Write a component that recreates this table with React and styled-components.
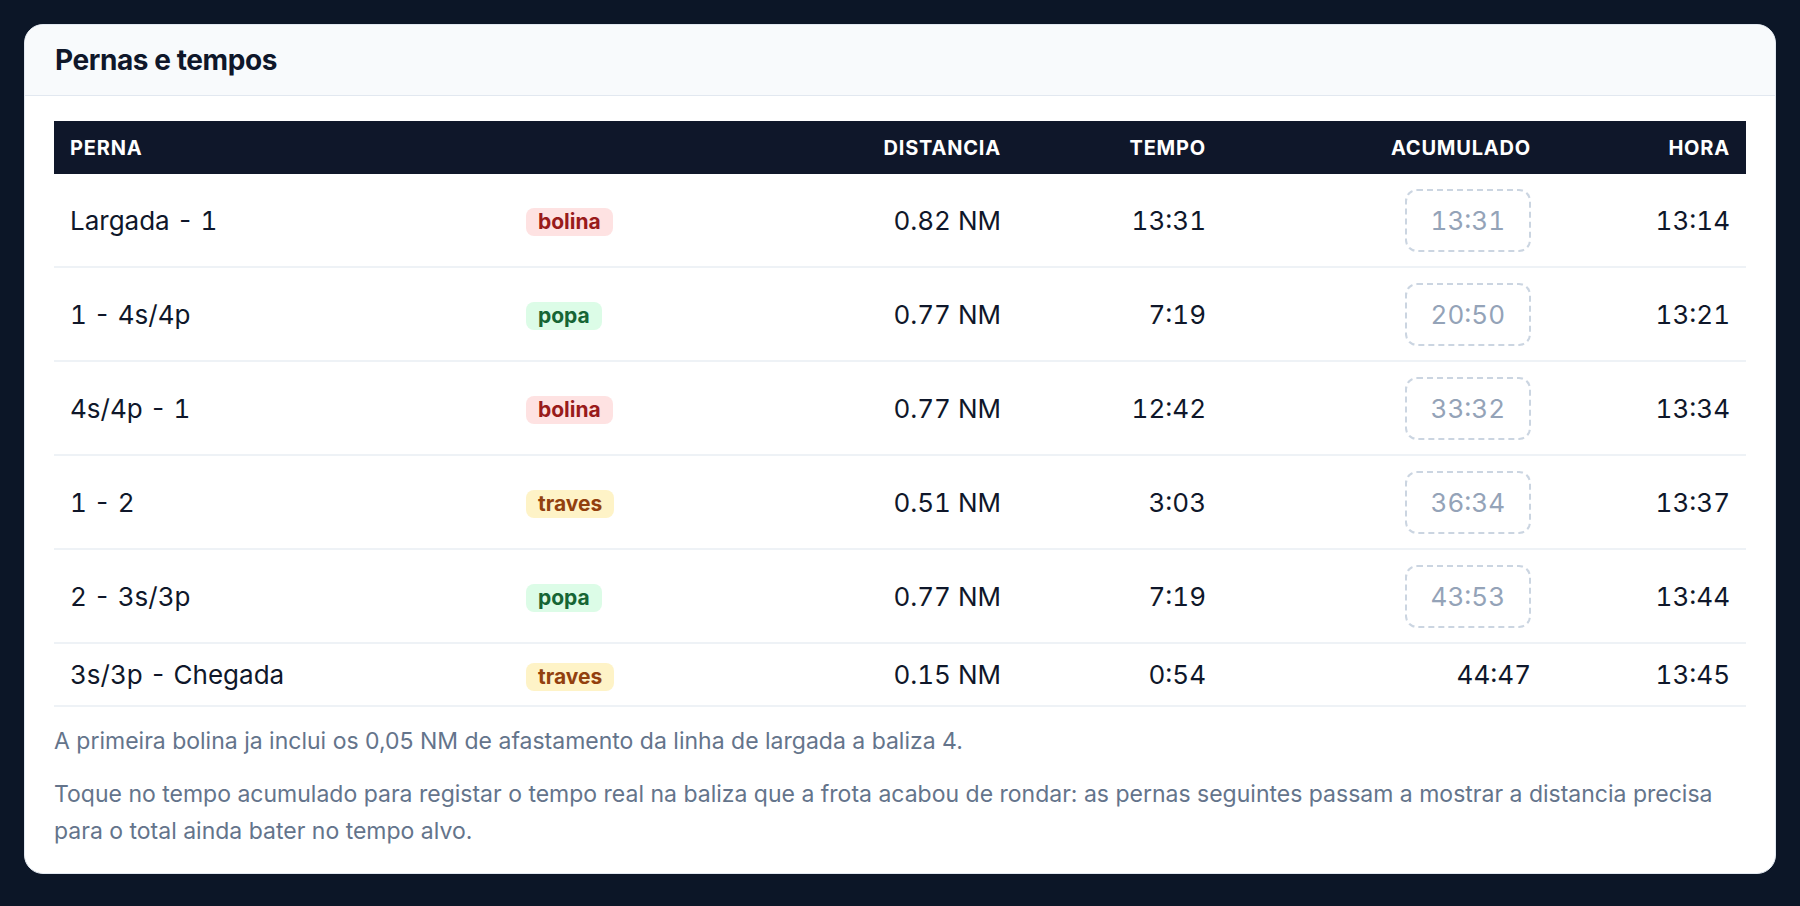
import React from 'react';
import styled, { createGlobalStyle } from 'styled-components';

const Global = createGlobalStyle`
  html, body {
    margin: 0;
    background: #0c1627;
  }
  body {
    font-family: Inter, "Noto Sans", sans-serif;
    -webkit-font-smoothing: antialiased;
  }
  * { box-sizing: border-box; }
`;

const Page = styled.main`
  padding: 24px;
  min-height: 100vh;
`;

const Card = styled.section`
  background: #ffffff;
  border: 1px solid #e2e8f0;
  border-radius: 19px;
  overflow: hidden;
`;

const CardHeader = styled.header`
  display: flex;
  align-items: center;
  height: 71px;
  padding: 0 30px;
  background: #f8fafc;
  border-bottom: 1px solid #e2e8f0;
`;

const Title = styled.h2`
  margin: 0;
  font-size: 28px;
  font-weight: 700;
  letter-spacing: -0.015em;
  color: #0f172a;
`;

const CardBody = styled.div`
  padding: 25px 29px 23px;
`;

const Table = styled.table`
  width: 100%;
  border-collapse: collapse;
  table-layout: fixed;
  font-variant-numeric: tabular-nums;
`;

const Th = styled.th`
  height: 53px;
  padding: 0 16px;
  background: #0f172a;
  color: #ffffff;
  font-size: 20px;
  font-weight: 700;
  letter-spacing: 0.04em;
  text-transform: uppercase;
  text-align: ${(p) => (p.$right ? 'right' : 'left')};
`;

const Td = styled.td`
  padding: 14.5px 16px;
  border-bottom: 2px solid #eef2f6;
  font-size: 26px;
  line-height: 31px;
  color: #0f172a;
  text-align: ${(p) => (p.$right ? 'right' : 'left')};
  vertical-align: middle;
`;

const tagColors = {
  bolina: { bg: '#fee2e2', fg: '#991b1b' },
  popa: { bg: '#dcfce7', fg: '#166534' },
  traves: { bg: '#fef3c7', fg: '#92400e' },
};

const Tag = styled.span`
  display: inline-block;
  padding: 2px 12px;
  border-radius: 8px;
  font-size: 21px;
  line-height: 24px;
  font-weight: 700;
  background: ${(p) => tagColors[p.$kind].bg};
  color: ${(p) => tagColors[p.$kind].fg};
`;

const CumButton = styled.button`
  display: inline-block;
  vertical-align: middle;
  padding: 14px 24px;
  border: 2px dashed #cbd5e1;
  border-radius: 12px;
  background: transparent;
  font-family: inherit;
  font-size: 26px;
  line-height: 31px;
  font-variant-numeric: tabular-nums;
  color: #94a3b8;
  cursor: pointer;
`;

const Note = styled.p`
  margin: 16px 0 0;
  font-size: 23px;
  line-height: 37px;
  color: #64748b;
`;

const legs = [
  { name: 'Largada - 1', kind: 'bolina', dist: '0.82 NM', time: '13:31', cum: '13:31', hour: '13:14', editable: true },
  { name: '1 - 4s/4p', kind: 'popa', dist: '0.77 NM', time: '7:19', cum: '20:50', hour: '13:21', editable: true },
  { name: '4s/4p - 1', kind: 'bolina', dist: '0.77 NM', time: '12:42', cum: '33:32', hour: '13:34', editable: true },
  { name: '1 - 2', kind: 'traves', dist: '0.51 NM', time: '3:03', cum: '36:34', hour: '13:37', editable: true },
  { name: '2 - 3s/3p', kind: 'popa', dist: '0.77 NM', time: '7:19', cum: '43:53', hour: '13:44', editable: true },
  { name: '3s/3p - Chegada', kind: 'traves', dist: '0.15 NM', time: '0:54', cum: '44:47', hour: '13:45', editable: false },
];

export default function App() {
  return (
    <>
      <Global />
      <Page>
        <Card>
          <CardHeader>
            <Title>Pernas e tempos</Title>
          </CardHeader>
          <CardBody>
            <Table>
              <colgroup>
                <col style={{ width: 456 }} />
                <col style={{ width: 250 }} />
                <col style={{ width: 257 }} />
                <col style={{ width: 205 }} />
                <col style={{ width: 325 }} />
                <col style={{ width: 199 }} />
              </colgroup>
              <thead>
                <tr>
                  <Th>Perna</Th>
                  <Th />
                  <Th $right>Distancia</Th>
                  <Th $right>Tempo</Th>
                  <Th $right>Acumulado</Th>
                  <Th $right>Hora</Th>
                </tr>
              </thead>
              <tbody>
                {legs.map((l) => (
                  <tr key={l.name}>
                    <Td>{l.name}</Td>
                    <Td>
                      <Tag $kind={l.kind}>{l.kind}</Tag>
                    </Td>
                    <Td $right>{l.dist}</Td>
                    <Td $right>{l.time}</Td>
                    <Td $right>
                      {l.editable ? <CumButton type="button">{l.cum}</CumButton> : l.cum}
                    </Td>
                    <Td $right>{l.hour}</Td>
                  </tr>
                ))}
              </tbody>
            </Table>
            <Note>A primeira bolina ja inclui os 0,05 NM de afastamento da linha de largada a baliza 4.</Note>
            <Note>
              Toque no tempo acumulado para registar o tempo real na baliza que a frota acabou de rondar: as pernas
              seguintes passam a mostrar a distancia precisa para o total ainda bater no tempo alvo.
            </Note>
          </CardBody>
        </Card>
      </Page>
    </>
  );
}
